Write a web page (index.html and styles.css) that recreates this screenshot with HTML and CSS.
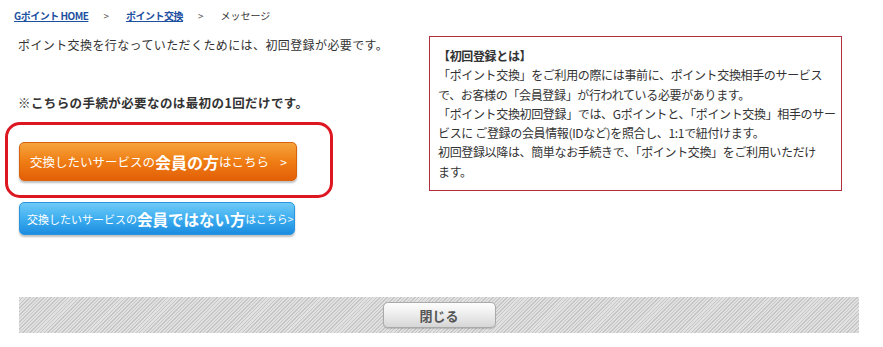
FILE: index.html
```html
<!DOCTYPE html>
<html lang="ja">
<head>
    <meta charset="UTF-8">
    <title>メッセージ | ポイント交換</title>
    <link rel="stylesheet" href="styles.css">
</head>
<body>
    <div class="breadcrumb">
        <a href="#">Gポイント HOME</a><span class="sep">&gt;</span><a href="#">ポイント交換</a><span class="sep">&gt;</span><span class="current">メッセージ</span>
    </div>
    <div class="main">
        <div class="leftcol">
            <p class="lead">ポイント交換を行なっていただくためには、初回登録が必要です。</p>
            <p class="note">※こちらの手続が必要なのは最初の1回だけです。</p>
            <div class="highlight">
                <a href="#" class="btn btn-member">交換したいサービスの<b class="big">会員の方</b>はこちら<span class="arrow">&gt;</span></a>
            </div>
            <a href="#" class="btn btn-guest">交換したいサービスの<b class="big">会員ではない方</b><span class="small">はこちら&gt;</span></a>
        </div>
        <div class="infobox">
            <p class="infotitle">【初回登録とは】</p>
            <p>「ポイント交換」をご利用の際には事前に、ポイント交換相手のサービス<br>で、お客様の「会員登録」が行われている必要があります。</p>
            <p>「ポイント交換初回登録」では、Gポイントと、「ポイント交換」相手のサー<br>ビスに ご登録の会員情報(IDなど)を照合し、1:1で紐付けます。</p>
            <p>初回登録以降は、簡単なお手続きで、「ポイント交換」をご利用いただけ<br>ます。</p>
        </div>
    </div>
    <div class="closebar">
        <button type="button" class="closebtn">閉じる</button>
    </div>
</body>
</html>
```

FILE: styles.css
```css
body { margin: 0; background: #fff; color: #333; font-family: "Noto Sans CJK JP", "Liberation Sans", sans-serif; }
p { margin: 0; }
.breadcrumb {padding: 8px 0 0 14px;font-size: 10px;line-height: 16px;}
.breadcrumb a {color: #1d4f9f;font-weight: bold;letter-spacing: -0.5px;}
.breadcrumb .sep {color: #555;margin: 0 17px 0 15px;}
.breadcrumb .current {color: #333;}
.main {display: flex;padding-left: 18px;}
.leftcol {width: 411px;}
.lead {margin-top: 12px;font-size: 12px;line-height: 18px;letter-spacing: 0.4px;}
.note {margin-top: 40px;font-size: 12.5px;line-height: 18px;font-weight: bold;letter-spacing: 0.4px;}
.highlight {width: 296px;margin: 10px 0 0 -13px;padding: 17px 15px 14px 11px;border: 3px solid #dd1722;border-radius: 15px;}
.btn {display: flex;align-items: center;color: #fff;text-decoration: none;border-radius: 5px;box-sizing: border-box;white-space: nowrap;}
.btn .big {font-size: 16px;}
.btn-member {width: 278px;height: 39px;padding: 0 9px 0 10px;font-size: 12.5px;background: linear-gradient(#f6a43c, #ef7d14 50%, #e35f07);border: 1px solid #d9620c;box-shadow: 0 2px 2px rgba(0,0,0,0.25);}
.btn-member .arrow {margin-left: auto;font-size: 12px;}
.btn-guest {width: 276px;height: 33px;margin: 4px 0 0 1px;padding-left: 7px;font-size: 11px;background: linear-gradient(#6fcaf6, #3eaef0 50%, #1c8ce0);border: 1px solid #2a95df;box-shadow: 0 2px 2px rgba(0,0,0,0.25);}
.btn-guest .big {font-size: 15.5px;}
.btn-guest .small {font-size: 10.5px;}
.infobox {width: 413px;height: 155px;box-sizing: border-box;margin-top: 12px;padding: 9px 6px 8px 8px;border: 1px solid #b0303e;font-size: 12px;line-height: 19.3px;white-space: nowrap;letter-spacing: -0.35px;}
.infotitle {font-weight: bold;}
.closebar {display: flex;justify-content: center;align-items: center;height: 36px;margin: 62px 24px 0 19px;background: repeating-linear-gradient(135deg, #c6c6c6 0 1px, #e1e1e1 1px 2.5px);}
.closebtn {width: 113px;height: 26px;border: 1px solid #aaa;border-radius: 5px;background: linear-gradient(#fdfdfd, #ececec 50%, #d6d6d6);color: #555;font-family: inherit;font-size: 13px;font-weight: bold;box-shadow: 0 1px 1px rgba(0,0,0,0.15);}
```
